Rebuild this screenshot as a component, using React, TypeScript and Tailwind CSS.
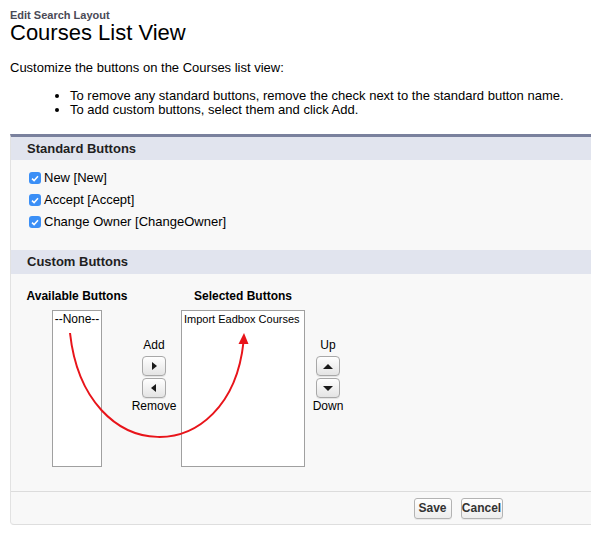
const STANDARD = ["New [New]", "Accept [Accept]", "Change Owner [ChangeOwner]"];

function Check() {
  return (
    <span className="mr-[3px] flex h-[12px] w-[12px] items-center justify-center rounded-[3px] bg-[#3b8ff6]">
      <svg width="8" height="7" viewBox="0 0 8 7">
        <path d="M1 3.6 L3.1 5.6 L7 1.2" fill="none" stroke="white" strokeWidth="1.5" />
      </svg>
    </span>
  );
}

function ArrowBtn({ dir }: { dir: "left" | "right" | "up" | "down" }) {
  const points = {
    right: "2,0 7,4 2,8",
    left: "6,0 1,4 6,8",
    up: "0,6 5,1 10,6",
    down: "0,1 5,6 10,1",
  }[dir];
  const horiz = dir === "left" || dir === "right";
  return (
    <button className="flex h-[20px] w-[24px] items-center justify-center rounded-[4px] border border-[#a8a8a8] bg-gradient-to-b from-white to-[#e4e4e4] shadow-[0_1px_0_rgba(0,0,0,0.08)]">
      <svg width={horiz ? 8 : 10} height={horiz ? 8 : 7} viewBox={horiz ? "0 0 8 8" : "0 0 10 7"}>
        <polygon points={points} fill="#1a1a1a" />
      </svg>
    </button>
  );
}

function MoveColumn({ top, a, b, bottom }: { top: string; a: "right" | "up"; b: "left" | "down"; bottom: string }) {
  return (
    <div className="flex flex-col items-center pt-[49px] text-[12px] leading-[14px]">
      <span>{top}</span>
      <div className="mt-[4px] flex flex-col gap-[2px]">
        <ArrowBtn dir={a} />
        <ArrowBtn dir={b} />
      </div>
      <span className="mt-[1px]">{bottom}</span>
    </div>
  );
}

function FooterButton({ label, width }: { label: string; width: string }) {
  return (
    <button
      className={`${width} h-[21px] rounded-[3px] border border-[#b3b3b3] bg-gradient-to-b from-white to-[#ededed] text-[12px] font-bold leading-[19px] text-[#333] shadow-[0_1px_0_rgba(0,0,0,0.06)]`}
    >
      {label}
    </button>
  );
}

export default function App() {
  return (
    <div
      className="relative min-h-[538px] w-[591px] overflow-hidden bg-white text-black"
      style={{ fontFamily: '"Liberation Sans", Arial, sans-serif' }}
    >
      <div className="pl-[10px] pt-[9px]">
        <div className="text-[11px] font-bold leading-[12px] text-[#4a4a56]">Edit Search Layout</div>
        <h1 className="text-[22px] leading-[24px]">Courses List View</h1>
        <p className="mt-[15px] text-[13px] leading-[15px]">Customize the buttons on the Courses list view:</p>
        <ul className="mt-[14px] list-disc pl-[60px] text-[13px] leading-[14px]">
          <li>To remove any standard buttons, remove the check next to the standard button name.</li>
          <li>To add custom buttons, select them and click Add.</li>
        </ul>
      </div>

      <div className="ml-[10px] mt-[17px] w-[896px] rounded-b-[4px] border-x border-b border-t-[3px] border-x-[#e2e2e2] border-b-[#dedede] border-t-[#7a819d] bg-[#f8f8f8]">
        {/* Standard buttons */}
        <div className="h-[23px] bg-[#e1e4ee] pl-[16px] text-[13px] font-bold leading-[23px] text-[#1f1f1f]">
          Standard Buttons
        </div>
        <div className="pb-[17px] pl-[18px] pt-[7px]">
          {STANDARD.map((s) => (
            <label key={s} className="flex h-[22px] items-center text-[13px]">
              <Check />
              {s}
            </label>
          ))}
        </div>

        {/* Custom buttons */}
        <div className="h-[24px] bg-[#e1e4ee] pl-[16px] text-[13px] font-bold leading-[24px] text-[#1f1f1f]">
          Custom Buttons
        </div>
        <div className="flex pb-[24px] pl-[16px] pt-[15px]">
          <div className="flex w-[100px] flex-col items-center">
            <span className="whitespace-nowrap text-[12px] font-bold leading-[14px]">Available Buttons</span>
            <div className="mt-[7px] h-[157px] w-[50px] whitespace-nowrap border border-[#a0a0a0] bg-white text-center text-[12px] leading-[16px]">
              --None--
            </div>
          </div>
          <div className="w-[54px]">
            <MoveColumn top="Add" a="right" b="left" bottom="Remove" />
          </div>
          <div className="flex w-[124px] flex-col items-center">
            <span className="whitespace-nowrap text-[12px] font-bold leading-[14px]">Selected Buttons</span>
            <div className="mt-[7px] h-[157px] w-[124px] border border-[#a0a0a0] bg-white pl-[2px] text-[11px] leading-[16px]">
              Import Eadbox Courses
            </div>
          </div>
          <div className="w-[46px]">
            <MoveColumn top="Up" a="up" b="down" bottom="Down" />
          </div>
        </div>

        {/* Footer */}
        <div className="flex justify-center gap-[9px] border-t border-[#dcdcdc] pb-[5px] pt-[6px]">
          <FooterButton label="Save" width="w-[38px]" />
          <FooterButton label="Cancel" width="w-[42px]" />
        </div>
      </div>

      {/* hand-drawn red arrow */}
      <svg className="pointer-events-none absolute left-0 top-0" width="591" height="538" viewBox="0 0 591 538">
        <path d="M70 333 C 85 470, 230 470, 243.5 342" fill="none" stroke="#e8141a" strokeWidth="2" />
        <polygon points="244,333 238.5,344 248.5,344" fill="#e8141a" />
      </svg>
    </div>
  );
}
